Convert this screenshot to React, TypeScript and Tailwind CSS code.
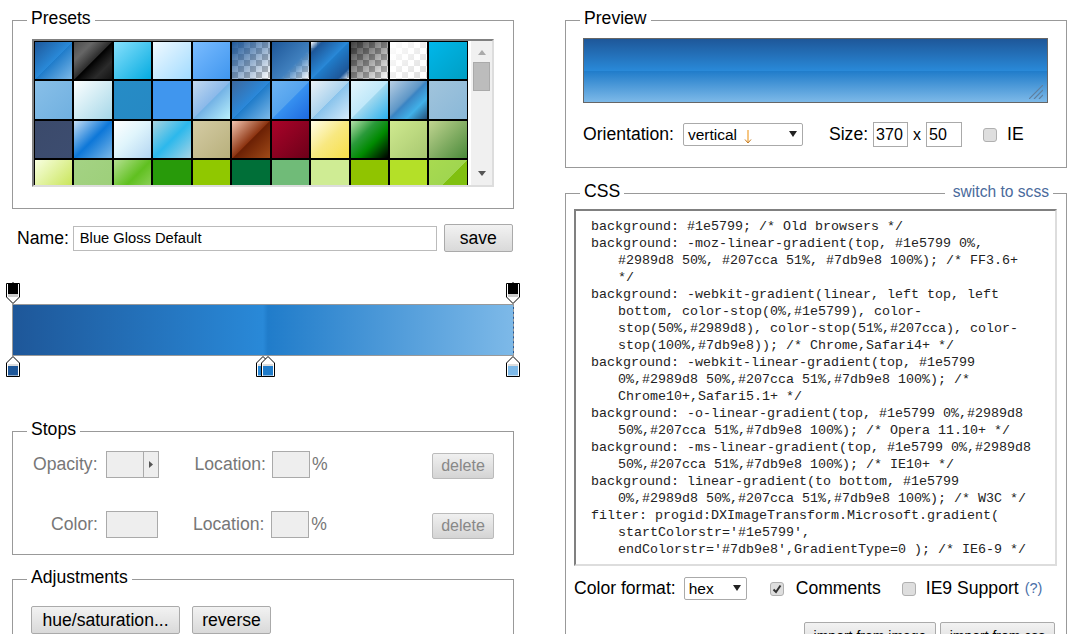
const tiles: string[] = [
  "bg-[linear-gradient(135deg,#1e5799_0%,#2989d8_50%,#207cca_51%,#7db9e8_100%)]",
  "bg-[linear-gradient(135deg,#4c4c4c_0%,#595959_12%,#666666_25%,#474747_39%,#2c2c2c_50%,#000000_51%,#111111_60%,#2b2b2b_76%,#1c1c1c_91%,#131313_100%)]",
  "bg-[linear-gradient(135deg,#87e0fd_0%,#53cbf1_40%,#05abe0_100%)]",
  "bg-[linear-gradient(135deg,#f0f9ff_0%,#cbebff_47%,#a1dbff_100%)]",
  "bg-[linear-gradient(135deg,#7abcff_0%,#60abf8_44%,#4096ee_100%)]",
  "bg-[image:linear-gradient(135deg,rgba(30,87,153,1)_0%,rgba(30,87,153,0)_100%),repeating-conic-gradient(#bbbbbb_0_25%,#ffffff_0_50%)] bg-[length:100%_100%,12px_12px]",
  "bg-[image:linear-gradient(135deg,rgba(30,87,153,1)_0%,rgba(64,128,190,1)_60%,rgba(125,185,232,0)_100%),repeating-conic-gradient(#bbbbbb_0_25%,#ffffff_0_50%)] bg-[length:100%_100%,12px_12px]",
  "bg-[image:linear-gradient(135deg,rgba(30,87,153,0)_0%,rgba(30,87,153,1)_15%,#2989d8_50%,#207cca_51%,rgba(30,87,153,1)_85%,rgba(30,87,153,0)_100%),repeating-conic-gradient(#bbbbbb_0_25%,#ffffff_0_50%)] bg-[length:100%_100%,12px_12px]",
  "bg-[image:linear-gradient(135deg,rgba(0,0,0,0.75)_0%,rgba(0,0,0,0)_100%),repeating-conic-gradient(#bbbbbb_0_25%,#ffffff_0_50%)] bg-[length:100%_100%,12px_12px]",
  "bg-[image:linear-gradient(135deg,rgba(255,255,255,1)_0%,rgba(255,255,255,0)_100%),repeating-conic-gradient(#dddddd_0_25%,#ffffff_0_50%)] bg-[length:100%_100%,12px_12px]",
  "bg-[linear-gradient(135deg,#00b7ea_0%,#009ec3_100%)]",

  "bg-[linear-gradient(135deg,#88bfe8_0%,#70b0e0_100%)]",
  "bg-[linear-gradient(135deg,#fcffff_0%,#a5d7e8_100%)]",
  "bg-[linear-gradient(135deg,#268cc6_0%,#2689c4_100%)]",
  "bg-[linear-gradient(135deg,#4096ee_0%,#4096ee_100%)]",
  "bg-[linear-gradient(135deg,#c3d9f0_0%,#8bb9ea_50%,#73b2e5_51%,#b9f0fc_100%)]",
  "bg-[linear-gradient(135deg,#3b679e_0%,#2b88d9_50%,#207cca_51%,#7db9e8_100%)]",
  "bg-[linear-gradient(135deg,#6db3f2_0%,#54a3ee_50%,#3690f0_51%,#1e69de_100%)]",
  "bg-[linear-gradient(135deg,#ebf1f6_0%,#abd3ee_50%,#89c3eb_51%,#d5ebfb_100%)]",
  "bg-[linear-gradient(135deg,#e4f5fc_0%,#bfe8f9_50%,#9fd8ef_51%,#2ab0ed_100%)]",
  "bg-[linear-gradient(135deg,#b8cfe4_0%,#5f97c7_45%,#3a84c3_50%,#41b0e8_72%,#25507a_100%)]",
  "bg-[linear-gradient(135deg,#a1c4dc_0%,#8ab8d8_100%)]",

  "bg-[linear-gradient(135deg,#3b4a6b_0%,#3d4d70_100%)]",
  "bg-[linear-gradient(135deg,#c5def5_0%,#0d77d8_50%,#7db9e8_100%)]",
  "bg-[linear-gradient(135deg,#ffffff_0%,#e0f5fc_45%,#b3d6f2_100%)]",
  "bg-[linear-gradient(135deg,#a8d4e0_0%,#2cb8ec_50%,#a8d4e4_100%)]",
  "bg-[linear-gradient(135deg,#d4cba4_0%,#b8b07c_100%)]",
  "bg-[linear-gradient(135deg,#f3c5b0_0%,#8c3310_50%,#6b2004_51%,#a04a18_100%)]",
  "bg-[linear-gradient(135deg,#a90329_0%,#8f0222_44%,#6d0019_100%)]",
  "bg-[linear-gradient(135deg,#fffde8_0%,#f8e880_50%,#f7df48_100%)]",
  "bg-[linear-gradient(135deg,#b4e0a8_0%,#2a9a3a_35%,#008a00_60%,#000000_100%)]",
  "bg-[linear-gradient(135deg,#cfe98f_0%,#a8c870_100%)]",
  "bg-[linear-gradient(135deg,#c0d490_0%,#4a8a3a_100%)]",

  "bg-[linear-gradient(135deg,#f8ffe0_0%,#c0e040_100%)]",
  "bg-[linear-gradient(135deg,#a4d284_0%,#9ccf78_100%)]",
  "bg-[linear-gradient(135deg,#b4e090_0%,#60c020_50%,#a0d870_100%)]",
  "bg-[#289a0a]",
  "bg-[#90c800]",
  "bg-[#006f38]",
  "bg-[#70bb78]",
  "bg-[#cfec94]",
  "bg-[#90c400]",
  "bg-[#b4e028]",
  "bg-[linear-gradient(135deg,#a8da50_0%,#a0d650_50%,#80c010_51%,#80c010_100%)]",
];

const code: string[][] = [
  ["background: #1e5799; /* Old browsers */"],
  ["background: -moz-linear-gradient(top, #1e5799 0%,", "#2989d8 50%, #207cca 51%, #7db9e8 100%); /* FF3.6+", "*/"],
  ["background: -webkit-gradient(linear, left top, left", "bottom, color-stop(0%,#1e5799), color-", "stop(50%,#2989d8), color-stop(51%,#207cca), color-", "stop(100%,#7db9e8)); /* Chrome,Safari4+ */"],
  ["background: -webkit-linear-gradient(top, #1e5799", "0%,#2989d8 50%,#207cca 51%,#7db9e8 100%); /*", "Chrome10+,Safari5.1+ */"],
  ["background: -o-linear-gradient(top, #1e5799 0%,#2989d8", "50%,#207cca 51%,#7db9e8 100%); /* Opera 11.10+ */"],
  ["background: -ms-linear-gradient(top, #1e5799 0%,#2989d8", "50%,#207cca 51%,#7db9e8 100%); /* IE10+ */"],
  ["background: linear-gradient(to bottom, #1e5799", "0%,#2989d8 50%,#207cca 51%,#7db9e8 100%); /* W3C */"],
  ["filter: progid:DXImageTransform.Microsoft.gradient(", "startColorstr='#1e5799',", "endColorstr='#7db9e8',GradientType=0 ); /* IE6-9 */"],
];

function TopMarker({ className }: { className: string }) {
  return (
    <svg width="14" height="22" viewBox="0 0 14 22" className={className}>
      <path d="M7 0V1" stroke="#000" />
      <path d="M0.5 1.5H13.5V15L7 21.5L0.5 15Z" fill="#fff" stroke="#000" />
      <rect x="2" y="2" width="10" height="10" fill="#000" />
      <rect x="2" y="12" width="10" height="3" fill="#cccccc" />
    </svg>
  );
}

function BottomMarker({ className, color }: { className: string; color: string }) {
  return (
    <svg width="14" height="21" viewBox="0 0 14 21" className={className}>
      <path d="M7 0.5L13.5 7V20.5H0.5V7Z" fill="#fff" stroke="#000" />
      <rect x="2" y="8" width="10" height="2" fill="#dddddd" />
      <rect x="2" y="10" width="10" height="9.5" fill={color} />
    </svg>
  );
}

function Caret() {
  return (
    <svg width="8" height="6" viewBox="0 0 8 6" className="absolute right-[5px] top-[7px]">
      <path d="M0 0H8L4 6Z" fill="#222" />
    </svg>
  );
}

function Check({ checked }: { checked?: boolean }) {
  return (
    <div className="flex h-[14px] w-[14px] items-center justify-center rounded-[3px] border border-[#b0b0b0] bg-[#dedede]">
      {checked && (
        <svg width="10" height="10" viewBox="0 0 10 10">
          <path d="M1.5 5.5L4 8L8.5 1.5" fill="none" stroke="#333" strokeWidth="2" />
        </svg>
      )}
    </div>
  );
}

const fieldset = "min-w-0 border border-[#999999]";
const legend = "px-[4px] pb-[4px] text-[17.6px] leading-[16px] text-black";
const btn = "flex items-center justify-center rounded-[2px] border border-[#aaaaaa] bg-[linear-gradient(#f2f2f2,#d9d9d9)] text-black";
const disabledBtn = "ml-auto mr-[19px] mt-[3px] flex h-[26px] w-[62px] items-center justify-center rounded-[2px] border border-[#bbbbbb] bg-[linear-gradient(#f0f0f0,#d4d4d4)] text-[16px] text-[#888888]";
const emptyInput = "h-[27px] border border-[#aaaaaa] bg-[#eeeeee]";
const stopLabel = "text-[17.6px] text-[#777777]";

export default function App() {
  return (
    <div className="flex h-[634px] w-[1071px] overflow-hidden bg-white pt-[10px] font-['Liberation_Sans',Arial,sans-serif] text-[17.6px] text-black">
      {/* Left column */}
      <div className="ml-[12px] w-[502px] shrink-0">
        <fieldset className={`${fieldset} h-[199px] px-[19px] pt-[9px]`}>
          <legend className={`${legend} ml-[-5px]`}>Presets</legend>
          <div className="flex h-[148px] w-[462px] border-2 border-t-[#808080] border-r-[#dddddd] border-b-[#dddddd] border-l-[#808080]">
            <div className="h-full w-[434px] overflow-hidden bg-black">
              <div className="grid grid-cols-[repeat(11,37.45px)] auto-rows-[37.4px] gap-[2px] p-[1px]">
                {tiles.map((t, i) => (
                  <div key={i} className={t} />
                ))}
              </div>
            </div>
            <div className="relative flex-1 bg-white pl-[3px]">
              <div className="relative h-full w-full bg-[#f0f0f0]">
                <svg width="8" height="5" viewBox="0 0 8 5" className="absolute left-[7px] top-[9px]">
                  <path d="M0 5H8L4 0Z" fill="#aaa" />
                </svg>
                <div className="absolute left-[2px] top-[21px] h-[29px] w-[17px] border border-[#aaaaaa] bg-[#bcbcbc]" />
                <svg width="8" height="5" viewBox="0 0 8 5" className="absolute left-[7px] bottom-[9px]">
                  <path d="M0 0H8L4 5Z" fill="#555" />
                </svg>
              </div>
            </div>
          </div>
        </fieldset>

        <div className="mt-[15px] flex items-center pl-[5px]">
          <span>Name:</span>
          <div className="ml-[4px] flex h-[25px] w-[364px] items-center border border-[#bbbbbb] pl-[6px] text-[14.7px]">Blue Gloss Default</div>
          <button className={`${btn} ml-[7px] h-[28px] w-[69px] text-[17.6px]`}>save</button>
        </div>

        <div className="relative mt-[30px] h-[95px] pt-[22px]">
          <div className="h-[52px] border border-[#999999] [border-right-style:dashed] bg-[linear-gradient(to_right,#1e5799_0%,#2989d8_50%,#207cca_51%,#7db9e8_100%)]" />
          <TopMarker className="absolute left-[-6px] top-0" />
          <TopMarker className="absolute left-[494px] top-0" />
          <BottomMarker className="absolute left-[-6px] top-[74px]" color="#1e5799" />
          <BottomMarker className="absolute left-[244px] top-[74px]" color="#2989d8" />
          <BottomMarker className="absolute left-[249px] top-[74px]" color="#207cca" />
          <BottomMarker className="absolute left-[494px] top-[74px]" color="#7db9e8" />
        </div>

        <fieldset className={`${fieldset} mt-[44px] h-[134px] pt-[10px]`}>
          <legend className={`${legend} ml-[14px]`}>Stops</legend>
          <div className="flex h-[27px] items-center">
            <span className={`${stopLabel} ml-[20px]`}>Opacity:</span>
            <div className={`${emptyInput} ml-[8px] flex w-[53px] justify-end`}>
              <div className="flex w-[15px] items-center justify-center border-l border-[#aaaaaa]">
                <svg width="4" height="7" viewBox="0 0 4 7"><path d="M0 0L4 3.5L0 7Z" fill="#555" /></svg>
              </div>
            </div>
            <span className={`${stopLabel} ml-[36px]`}>Location:</span>
            <div className={`${emptyInput} ml-[6px] w-[38px]`} />
            <span className={`${stopLabel} ml-[2px]`}>%</span>
            <button className={disabledBtn}>delete</button>
          </div>
          <div className="mt-[33px] flex h-[27px] items-center">
            <span className={`${stopLabel} ml-[38px]`}>Color:</span>
            <div className={`${emptyInput} ml-[8px] w-[52px]`} />
            <span className={`${stopLabel} ml-[35px]`}>Location:</span>
            <div className={`${emptyInput} ml-[7px] w-[38px]`} />
            <span className={`${stopLabel} ml-[2px]`}>%</span>
            <button className={disabledBtn}>delete</button>
          </div>
        </fieldset>

        <fieldset className={`${fieldset} mt-[14px] h-[120px] pl-[18px] pt-[17px]`}>
          <legend className={`${legend} ml-[-4px]`}>Adjustments</legend>
          <div className="flex gap-[12px]">
            <button className={`${btn} h-[28px] w-[149px] text-[17.6px]`}>hue/saturation...</button>
            <button className={`${btn} h-[28px] w-[79px] text-[17.6px]`}>reverse</button>
          </div>
        </fieldset>
      </div>

      {/* Right column */}
      <div className="ml-[51px] w-[502px] shrink-0">
        <fieldset className={`${fieldset} h-[158px] px-[17px] pt-[8px]`}>
          <legend className={`${legend} ml-[-3px]`}>Preview</legend>
          <div className="relative h-[65px] w-[465px] border border-[#666666] bg-[linear-gradient(to_bottom,#1e5799_0%,#2989d8_50%,#207cca_51%,#7db9e8_100%)]">
            <svg width="14" height="14" viewBox="0 0 14 14" className="absolute bottom-[3px] right-[4px]">
              <path d="M0 14L14 0M5 14L14 5M10 14L14 10" stroke="#5f7f9f" strokeWidth="1.2" />
            </svg>
          </div>
          <div className="mt-[19px] flex h-[25px] items-center">
            <span>Orientation:</span>
            <div className="relative ml-[9px] flex h-[23px] w-[120px] items-center rounded-[2px] border border-[#aaaaaa] pl-[4px] text-[15.5px]">
              <span>vertical</span>
              <svg width="8" height="14" viewBox="0 0 8 14" className="ml-[7px] mt-[4px]">
                <path d="M4 0V12" stroke="#f0a030" strokeWidth="1.2" />
                <path d="M1 9.5L4 13L7 9.5" fill="none" stroke="#c07820" strokeWidth="1" />
              </svg>
              <Caret />
            </div>
            <span className="ml-[26px]">Size:</span>
            <div className="ml-[5px] flex h-[25px] w-[35px] items-center border border-[#aaaaaa] pl-[2px] text-[16px]">370</div>
            <span className="mx-[5px] text-[16px]">x</span>
            <div className="flex h-[25px] w-[36px] items-center border border-[#aaaaaa] pl-[2px] text-[16px]">50</div>
            <div className="ml-[21px]"><Check /></div>
            <span className="ml-[10px]">IE</span>
          </div>
        </fieldset>

        <div className="relative mt-[15px]">
          <fieldset className={`${fieldset} h-[500px] px-[8px] pt-[6px]`}>
            <legend className={`${legend} ml-[6px]`}>CSS</legend>
            <div className="h-[357px] w-[483px] overflow-hidden border-2 border-t-[#808080] border-r-[#dddddd] border-b-[#dddddd] border-l-[#808080] pl-[15px] pt-[7px] font-['Liberation_Mono',monospace] text-[13.33px] leading-[17px] text-[#222222]">
              {code.map((rule, i) => (
                <div key={i}>
                  {rule.map((line, j) => (
                    <div key={j} className={j === 0 ? "whitespace-pre" : "whitespace-pre pl-[27px]"}>{line}</div>
                  ))}
                </div>
              ))}
            </div>
            <div className="mt-[11px] flex h-[23px] items-center">
              <span>Color format:</span>
              <div className="relative ml-[8px] flex h-[23px] w-[63px] items-center rounded-[2px] border border-[#aaaaaa] pl-[4px] text-[15.5px]">
                <span>hex</span>
                <Caret />
              </div>
              <div className="ml-[23px]"><Check checked /></div>
              <span className="ml-[12px]">Comments</span>
              <div className="ml-[21px]"><Check /></div>
              <span className="ml-[10px]">IE9 Support</span>
              <span className="ml-[6px] text-[14.5px] text-[#4a6fa8]">(?)</span>
            </div>
            <div className="mt-[22px] flex justify-end gap-[4px] pr-[3px]">
              <button className={`${btn} h-[28px] w-[132px] text-[14px]`}>import from image</button>
              <button className={`${btn} h-[28px] w-[115px] text-[14px]`}>import from css</button>
            </div>
          </fieldset>
          <a className="absolute right-[14px] top-0 bg-white pl-[8px] pr-[4px] text-[15.6px] leading-[18px] text-[#4a6a9c]">switch to scss</a>
        </div>
      </div>
    </div>
  );
}
